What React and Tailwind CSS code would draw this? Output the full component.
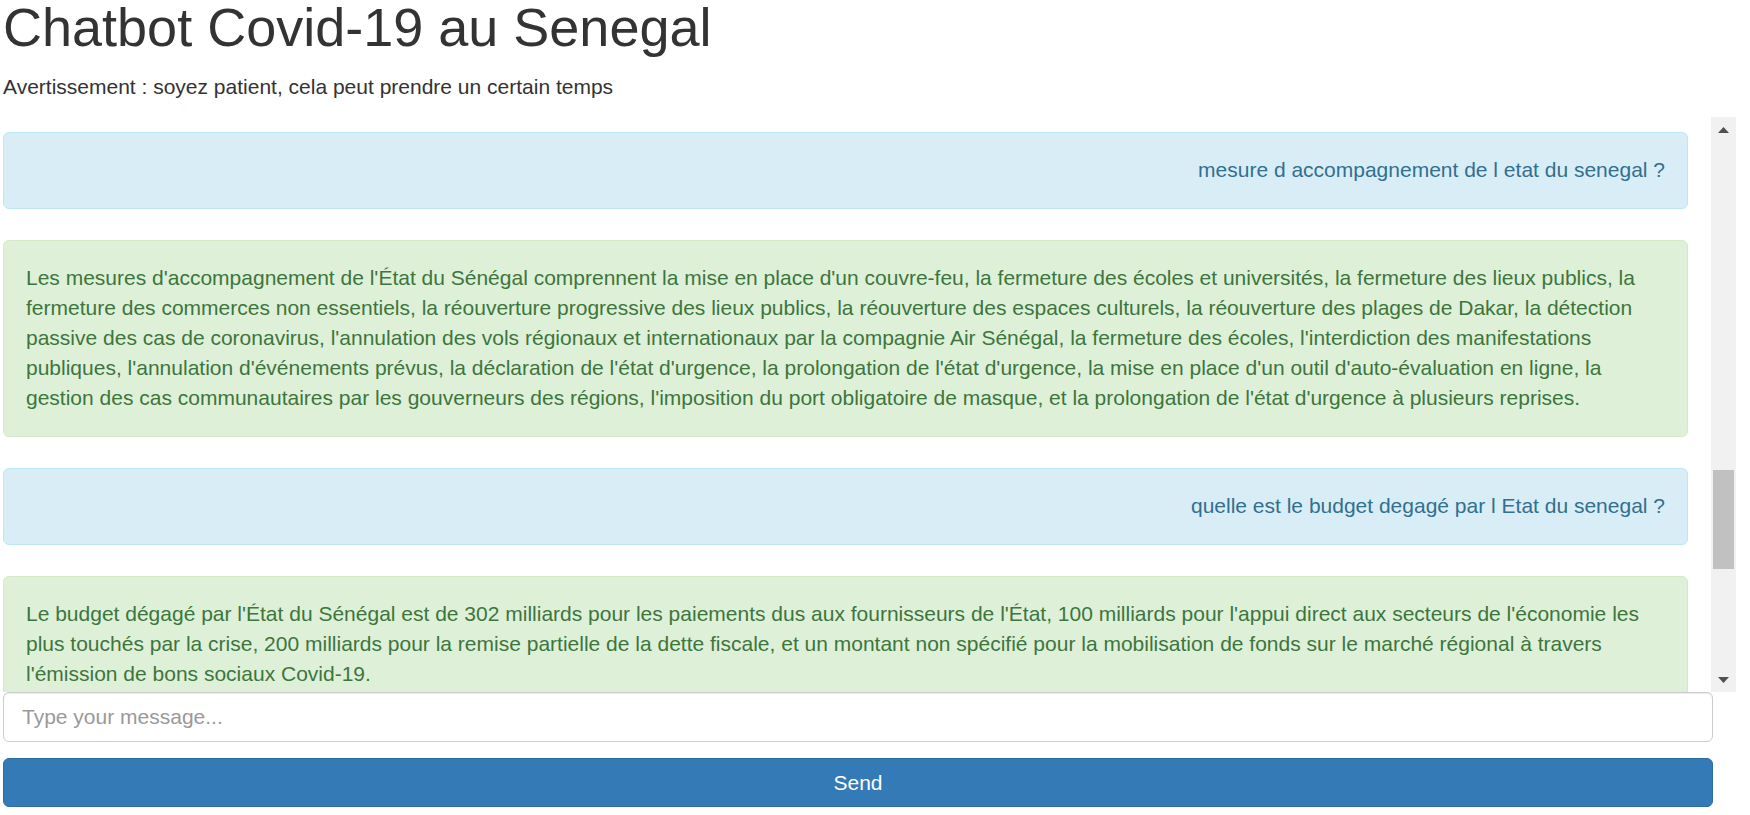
import React from "react";

const messages = [
  {
    q: "mesure d accompagnement de l etat du senegal ?",
    a: "Les mesures d'accompagnement de l'État du Sénégal comprennent la mise en place d'un couvre-feu, la fermeture des écoles et universités, la fermeture des lieux publics, la fermeture des commerces non essentiels, la réouverture progressive des lieux publics, la réouverture des espaces culturels, la réouverture des plages de Dakar, la détection passive des cas de coronavirus, l'annulation des vols régionaux et internationaux par la compagnie Air Sénégal, la fermeture des écoles, l'interdiction des manifestations publiques, l'annulation d'événements prévus, la déclaration de l'état d'urgence, la prolongation de l'état d'urgence, la mise en place d'un outil d'auto-évaluation en ligne, la gestion des cas communautaires par les gouverneurs des régions, l'imposition du port obligatoire de masque, et la prolongation de l'état d'urgence à plusieurs reprises.",
  },
  {
    q: "quelle est le budget degagé par l Etat du senegal ?",
    a: "Le budget dégagé par l'État du Sénégal est de 302 milliards pour les paiements dus aux fournisseurs de l'État, 100 milliards pour l'appui direct aux secteurs de l'économie les plus touchés par la crise, 200 milliards pour la remise partielle de la dette fiscale, et un montant non spécifié pour la mobilisation de fonds sur le marché régional à travers l'émission de bons sociaux Covid-19.",
  },
];

const UserMsg = ({ text }) => (
  <div className="mb-[31px] rounded-[6px] border border-[#bce8f1] bg-[#d9edf7] px-[22px] pt-[22px] pb-[23px] text-right text-[#31708f]">
    {text}
  </div>
);

const BotMsg = ({ text }) => (
  <div className="mb-[31px] rounded-[6px] border border-[#d6e9c6] bg-[#dff0d8] px-[22px] pt-[22px] pb-[23px] text-[#3c763d]">
    {text}
  </div>
);

// classic scrollbar look, scrolled part way down
const ScrollBar = () => (
  <div className="flex w-[25px] shrink-0 flex-col bg-[#f1f1f1]">
    <div className="flex h-[25px] items-center justify-center">
      <svg width="11" height="6" viewBox="0 0 11 6">
        <path d="M5.5 0 L11 6 L0 6 Z" fill="#505050" />
      </svg>
    </div>
    <div className="flex flex-1 flex-col px-[2px]">
      <div className="h-[328px]" />
      <div className="h-[99px] bg-[#c1c1c1]" />
    </div>
    <div className="flex h-[25px] items-center justify-center">
      <svg width="11" height="6" viewBox="0 0 11 6">
        <path d="M0 0 L11 0 L5.5 6 Z" fill="#505050" />
      </svg>
    </div>
  </div>
);

export default function App() {
  return (
    <div className="min-h-screen bg-white pl-[3px] font-['Liberation_Sans',Arial,sans-serif] text-[21px] leading-[30px] text-[#333]">
      <h1 className="-mt-[2px] mb-[15px] text-[54px] font-normal leading-[59px]">
        Chatbot Covid-19 au Senegal
      </h1>
      <p className="mb-[15px]">
        Avertissement : soyez patient, cela peut prendre un certain temps
      </p>

      <div className="flex h-[575px] w-[1733px]">
        <div className="flex-1 overflow-y-auto pt-[15px] pr-[23px] [scrollbar-width:none]">
          {messages.map((m, i) => (
            <React.Fragment key={i}>
              <UserMsg text={m.q} />
              <BotMsg text={m.a} />
            </React.Fragment>
          ))}
        </div>
        <ScrollBar />
      </div>

      <form className="w-[1710px]" onSubmit={(e) => e.preventDefault()}>
        <input
          type="text"
          placeholder="Type your message..."
          className="block h-[50px] w-full rounded-[6px] border border-[#ccc] bg-white px-[18px] py-[9px] text-[21px] text-[#555] shadow-[inset_0_1px_1px_rgba(0,0,0,0.075)] outline-none placeholder:text-[#999]"
        />
        <button
          type="submit"
          className="mt-[16px] block h-[49px] w-full rounded-[6px] border border-[#2e6da4] bg-[#337ab7] text-[21px] text-white"
        >
          Send
        </button>
      </form>
    </div>
  );
}
